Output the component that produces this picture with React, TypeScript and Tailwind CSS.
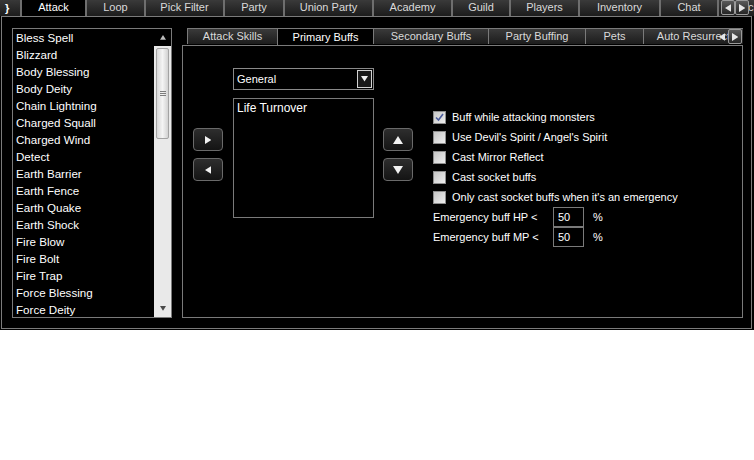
import React from "react";

type Tab = { label: string; w: string; active?: boolean };

const topTabs: Tab[] = [
  { label: "Attack", w: "w-[65px]", active: true },
  { label: "Loop", w: "w-[59px]" },
  { label: "Pick Filter", w: "w-[79px]" },
  { label: "Party", w: "w-[60px]" },
  { label: "Union Party", w: "w-[89px]" },
  { label: "Academy", w: "w-[79px]" },
  { label: "Guild", w: "w-[58px]" },
  { label: "Players", w: "w-[69px]" },
  { label: "Inventory", w: "w-[81px]" },
  { label: "Chat", w: "w-[58px]" },
  { label: "Macro", w: "w-[60px]" },
];

const innerTabs: Tab[] = [
  { label: "Attack Skills", w: "w-[90px]" },
  { label: "Primary Buffs", w: "w-[96px]", active: true },
  { label: "Secondary Buffs", w: "w-[115px]" },
  { label: "Party Buffing", w: "w-[97px]" },
  { label: "Pets", w: "w-[58px]" },
  { label: "Auto Resurrect", w: "w-[100px]" },
];

const skills = [
  "Bless Spell",
  "Blizzard",
  "Body Blessing",
  "Body Deity",
  "Chain Lightning",
  "Charged Squall",
  "Charged Wind",
  "Detect",
  "Earth Barrier",
  "Earth Fence",
  "Earth Quake",
  "Earth Shock",
  "Fire Blow",
  "Fire Bolt",
  "Fire Trap",
  "Force Blessing",
  "Force Deity",
];

const options = [
  { label: "Buff while attacking monsters", checked: true },
  { label: "Use Devil's Spirit / Angel's Spirit" },
  { label: "Cast Mirror Reflect" },
  { label: "Cast socket buffs" },
  { label: "Only cast socket buffs when it's an emergency" },
];

function Tri({ dir, color = "#f2f2f2", size = 4 }: { dir: "l" | "r" | "u" | "d"; color?: string; size?: number }) {
  const s = size;
  const pts =
    dir === "r"
      ? `0,0 ${s * 1.6},${s} 0,${s * 2}`
      : dir === "l"
      ? `${s * 1.6},0 0,${s} ${s * 1.6},${s * 2}`
      : dir === "u"
      ? `${s},0 ${s * 2},${s * 1.6} 0,${s * 1.6}`
      : `0,0 ${s * 2},0 ${s},${s * 1.6}`;
  const w = dir === "l" || dir === "r" ? s * 1.6 : s * 2;
  const h = dir === "l" || dir === "r" ? s * 2 : s * 1.6;
  return (
    <svg width={w} height={h} viewBox={`0 0 ${w} ${h}`}>
      <polygon points={pts} fill={color} />
    </svg>
  );
}

function SmallArrowBtn({ dir }: { dir: "l" | "r" }) {
  return (
    <div className="flex h-[15px] w-[14px] items-center justify-center rounded-[2px] border border-[#9a9a9a] bg-gradient-to-b from-[#5a5a5a] to-[#262626]">
      <Tri dir={dir} color="#e6e6e6" size={4} />
    </div>
  );
}

function TopTabs() {
  return (
    <div className="relative flex h-[16px] text-[11px] text-[#dadada]">
      <div className="flex w-[22px] shrink-0 items-center border-r-2 border-[#6e6e6e] bg-gradient-to-b from-[#383838] to-[#1c1c1c] pl-[5px] text-white">
        <span className="font-bold leading-none">{"}"}</span>
      </div>
      {topTabs.map((t) => (
        <div
          key={t.label}
          className={`${t.w} flex shrink-0 items-center justify-center overflow-hidden border-r-2 border-[#6e6e6e] pb-px ${
            t.active ? "bg-black text-white" : "bg-gradient-to-b from-[#3a3a3a] to-[#1c1c1c]"
          }`}
        >
          {t.label}
        </div>
      ))}
      <div className="absolute top-0 left-[721px] flex">
        <SmallArrowBtn dir="l" />
        <SmallArrowBtn dir="r" />
      </div>
    </div>
  );
}

function SkillList() {
  return (
    <div className="flex h-[290px] w-[160px] shrink-0 border border-[#7a7a7a] bg-black">
      <div className="flex-1 overflow-hidden pl-[3px] text-[11.6px] text-white">
        {skills.map((s) => (
          <div key={s} className="flex h-[17px] items-center whitespace-nowrap">
            {s}
          </div>
        ))}
      </div>
      <div className="flex w-[17px] flex-col bg-[#e9e9e9]">
        <div className="flex h-[17px] items-center justify-center bg-black">
          <Tri dir="u" color="#bdbdbd" size={3} />
        </div>
        <div className="mx-[2px] mt-[2px] flex h-[91px] items-center justify-center rounded-[2px] border border-[#a3a3a3] bg-gradient-to-r from-[#d7d7d7] via-[#f4f4f4] to-[#d2d2d2]">
          <div className="flex flex-col gap-px">
            <div className="h-px w-[6px] bg-[#7c7c7c]" />
            <div className="h-px w-[6px] bg-[#7c7c7c]" />
            <div className="h-px w-[6px] bg-[#7c7c7c]" />
          </div>
        </div>
        <div className="flex-1" />
        <div className="flex h-[17px] items-center justify-center">
          <Tri dir="d" color="#4a4a4a" size={3} />
        </div>
      </div>
    </div>
  );
}

function NavBtn({ dir }: { dir: "l" | "r" | "u" | "d" }) {
  return (
    <div className="flex h-[23px] w-[30px] items-center justify-center rounded-[4px] border border-[#6a6a6a] bg-gradient-to-b from-[#2e2e2e] to-[#141414]">
      <Tri dir={dir} size={dir === "l" || dir === "r" ? 4 : 5} />
    </div>
  );
}

function Checkbox({ checked }: { checked?: boolean }) {
  return (
    <div className="flex h-[13px] w-[13px] shrink-0 items-center justify-center border border-[#8e8e8e] bg-gradient-to-br from-[#c6c6c6] to-[#ededed]">
      {checked ? (
        <svg width="9" height="9" viewBox="0 0 9 9">
          <path d="M1 4.5 L3.5 7 L8 1" fill="none" stroke="#4b5c9c" strokeWidth="1.6" />
        </svg>
      ) : null}
    </div>
  );
}

function PrimaryBuffs() {
  return (
    <div className="flex h-[273px] items-start border border-[#7a7a7a] bg-black text-[11px] text-white">
      <div className="ml-[10px] mt-[82px] flex flex-col gap-[7px]">
        <NavBtn dir="r" />
        <NavBtn dir="l" />
      </div>
      <div className="ml-[10px] mt-[22px] flex w-[141px] flex-col gap-[8px]">
        <div className="flex h-[22px] items-center justify-between border border-[#8a8a8a] pl-[3px] pr-px">
          <span>General</span>
          <div className="flex h-[18px] w-[15px] items-center justify-center border border-[#d2d2d2] bg-[#1a1a1a]">
            <Tri dir="d" size={3.5} />
          </div>
        </div>
        <div className="h-[120px] border border-[#7a7a7a] pl-[3px] text-[12px]">
          <div className="flex h-[17px] items-center">Life Turnover</div>
        </div>
      </div>
      <div className="ml-[9px] mt-[82px] flex flex-col gap-[7px]">
        <NavBtn dir="u" />
        <NavBtn dir="d" />
      </div>
      <div className="ml-[20px] mt-[61px] flex flex-col">
        {options.map((o) => (
          <div key={o.label} className="flex h-[20px] items-center gap-[6px]">
            <Checkbox checked={o.checked} />
            <span className="whitespace-nowrap">{o.label}</span>
          </div>
        ))}
        {["Emergency buff HP <", "Emergency buff MP <"].map((l) => (
          <div key={l} className="flex h-[20px] items-center">
            <span className="w-[120px] whitespace-nowrap">{l}</span>
            <div className="flex h-[20px] w-[31px] items-center border border-[#7a7a7a] pl-[4px]">50</div>
            <span className="ml-[9px]">%</span>
          </div>
        ))}
      </div>
    </div>
  );
}

function InnerTabs() {
  return (
    <div className="ml-[10px] flex w-[561px] flex-col">
      <div className="relative flex h-[17px] items-end pl-[5px] text-[11px] text-[#dadada]">
        <div className="flex overflow-hidden">
          {innerTabs.map((t) => (
            <div
              key={t.label}
              className={`${t.w} flex shrink-0 items-center justify-center whitespace-nowrap border-t border-l border-[#7a7a7a] ${
                t.active
                  ? "-mb-px h-[18px] bg-black text-white"
                  : "h-[16px] bg-gradient-to-b from-[#3a3a3a] to-[#1c1c1c]"
              }`}
            >
              {t.label}
            </div>
          ))}
        </div>
        <div className="absolute top-px right-px flex items-center">
          <div className="flex h-[15px] w-[12px] items-center justify-center">
            <Tri dir="l" color="#e6e6e6" size={4} />
          </div>
          <SmallArrowBtn dir="r" />
        </div>
      </div>
      <PrimaryBuffs />
    </div>
  );
}

export default function App() {
  return (
    <div className="h-[330px] w-[754px] overflow-hidden bg-black font-['Liberation_Sans',Arial,sans-serif] text-[12px] leading-none">
      <TopTabs />
      <div className="ml-px flex h-[313px] w-[751px] items-start border border-[#7b7b7b] pt-[11px] pl-[10px]">
        <SkillList />
        <InnerTabs />
      </div>
    </div>
  );
}
